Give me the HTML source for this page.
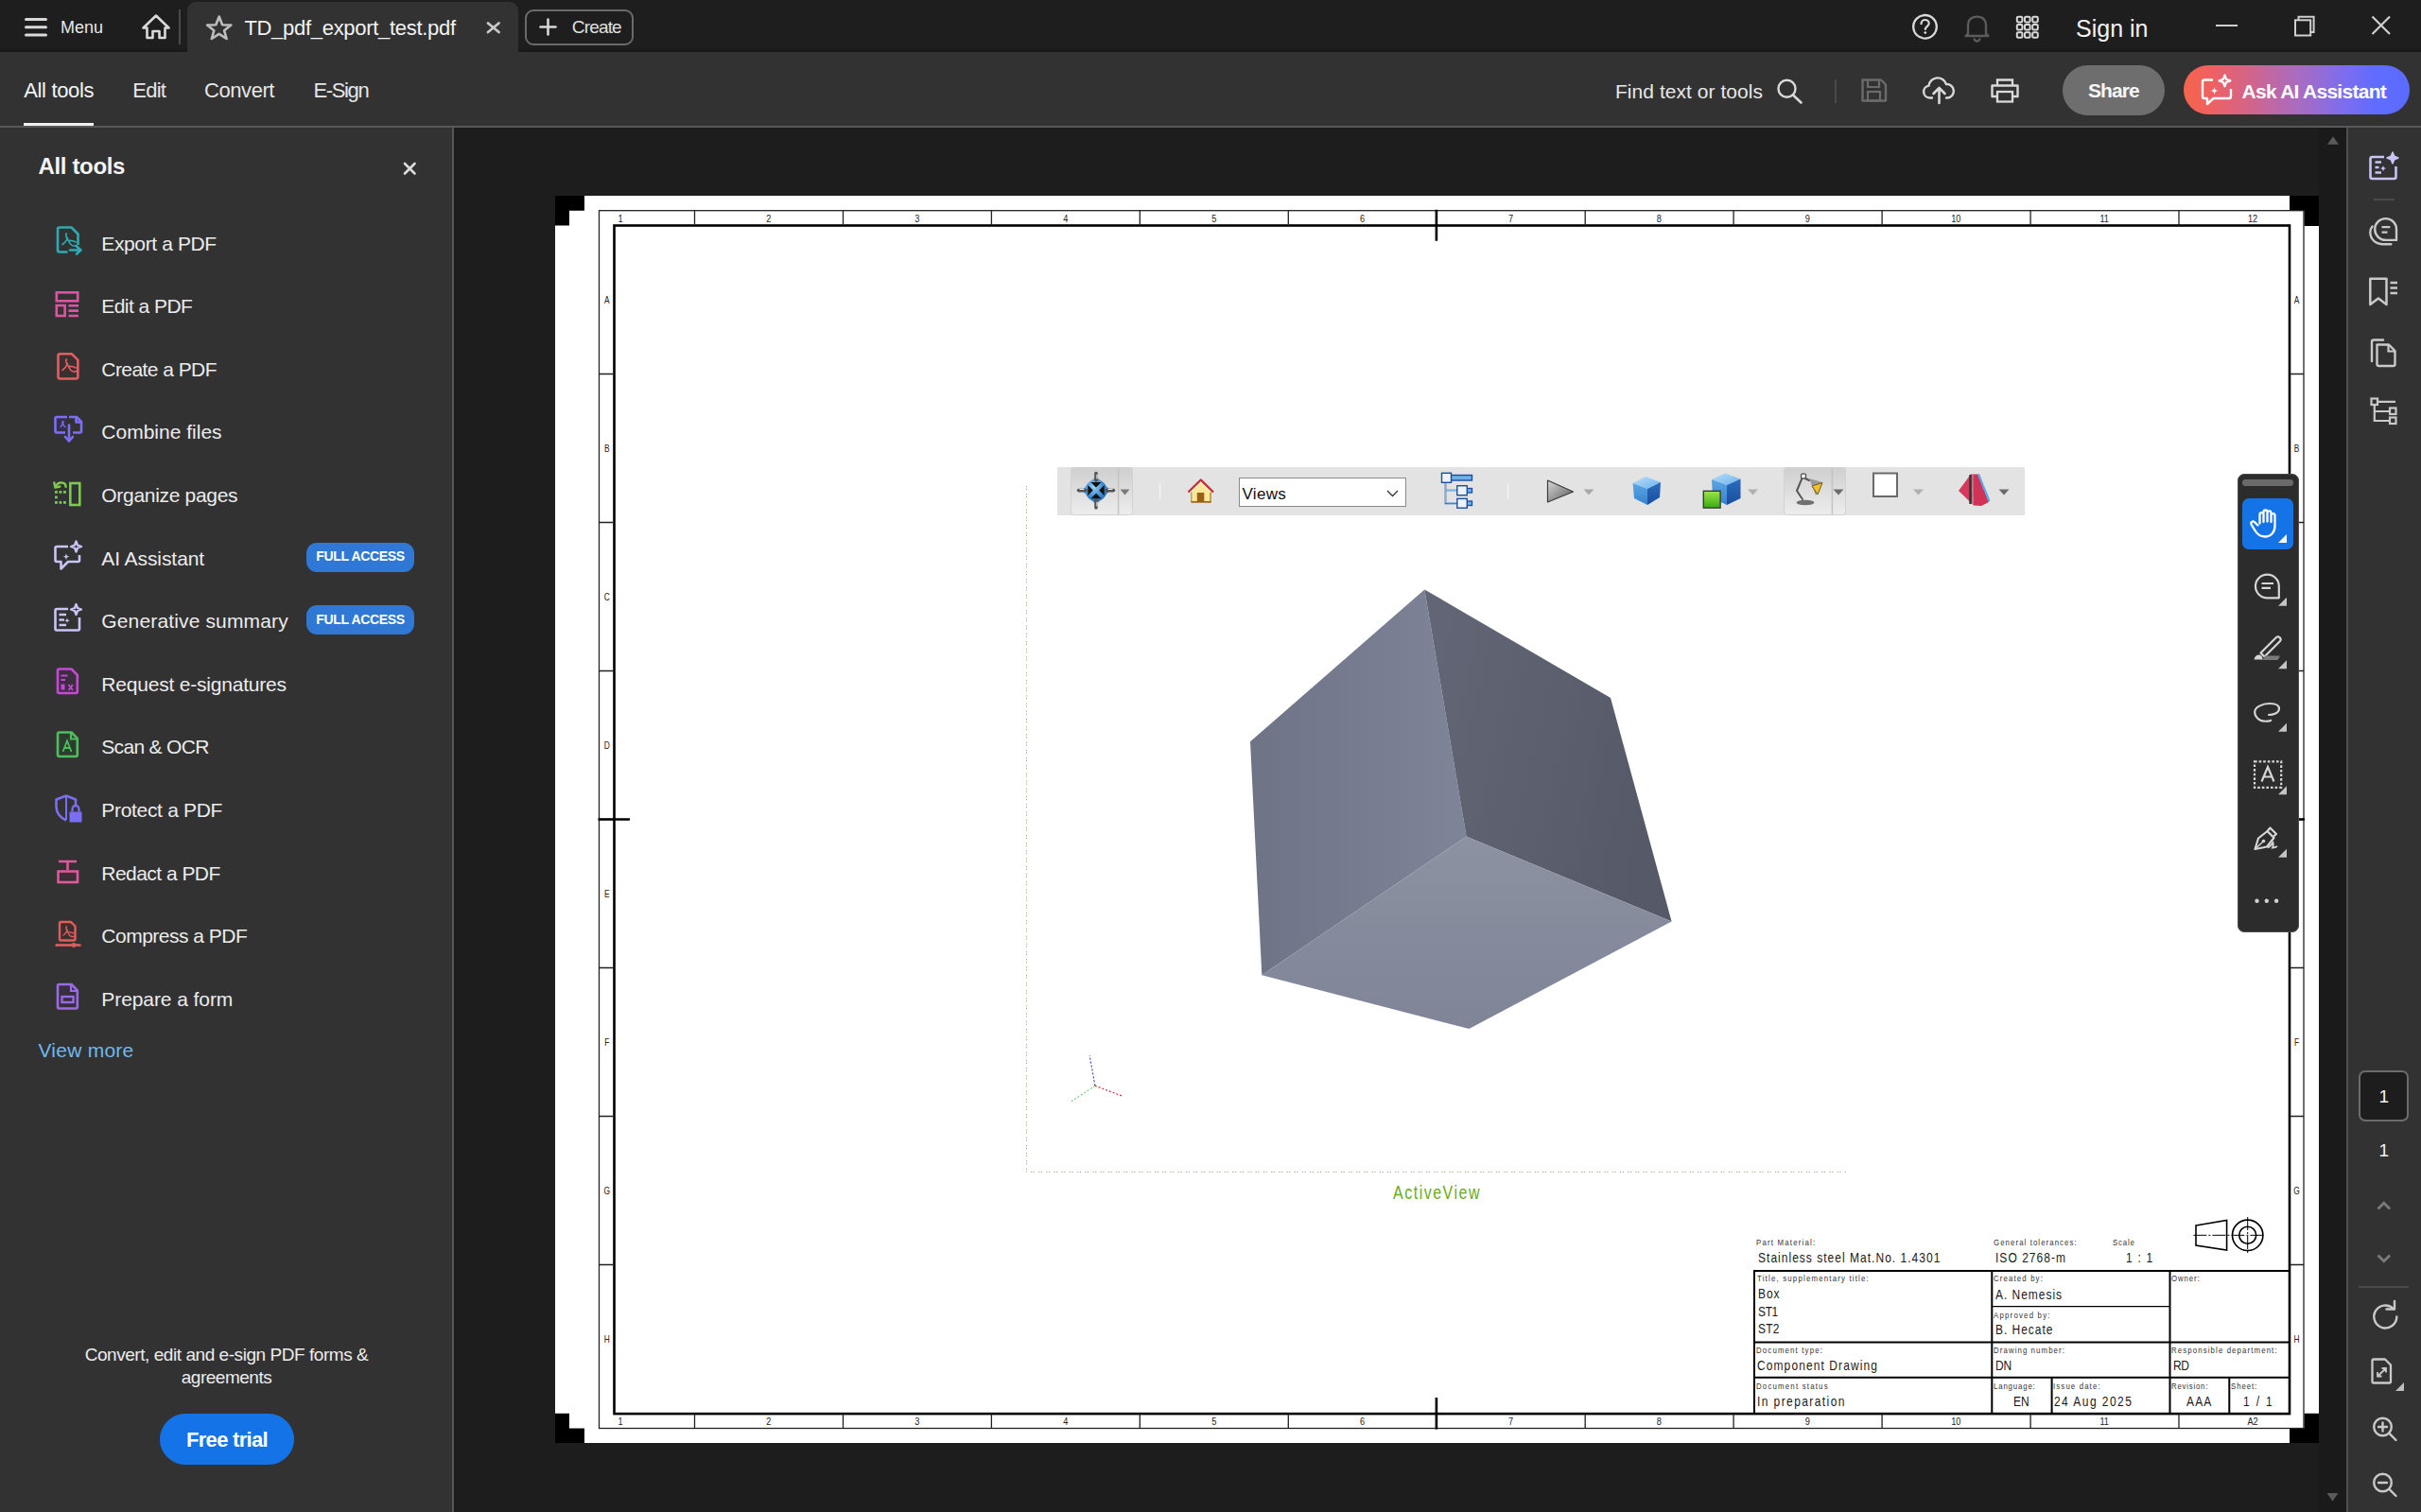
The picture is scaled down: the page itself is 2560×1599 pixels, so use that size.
<!DOCTYPE html><html><head><meta charset="utf-8"><style>
*{margin:0;padding:0;box-sizing:border-box}
html,body{width:2560px;height:1599px;overflow:hidden;background:#1e1e1e;font-family:"Liberation Sans",sans-serif;color:#fff;position:relative}
svg{position:absolute;overflow:visible}
</style></head><body>
<div style="position:absolute;left:0px;top:0px;width:2560px;height:55px;background:#1e1e1e"></div>
<div style="position:absolute;left:0px;top:52px;width:2560px;height:3px;background:#1a1a1a"></div>
<div style="position:absolute;left:0px;top:55px;width:2560px;height:78px;background:#323232"></div>
<div style="position:absolute;left:0px;top:133px;width:2560px;height:2px;background:#585858"></div>
<div style="position:absolute;left:0px;top:135px;width:478px;height:1464px;background:#323232"></div>
<div style="position:absolute;left:478px;top:135px;width:2px;height:1464px;background:#565656"></div>
<div style="position:absolute;left:480px;top:135px;width:1972px;height:1464px;background:#1d1d1d"></div>
<div style="position:absolute;left:2452px;top:135px;width:29px;height:1464px;background:#1a1a1a"></div>
<div style="position:absolute;left:2481px;top:135px;width:2px;height:1464px;background:#4f4f4f"></div>
<div style="position:absolute;left:2483px;top:135px;width:77px;height:1464px;background:#323232"></div>
<svg style="left:20px;top:10px;" width="40" height="40" viewBox="20 10 40 40"><g stroke="#d9d9d9" stroke-width="3" stroke-linecap="round"><path d="M27.5 20.5H48.5M27.5 28.7H48.5M27.5 37H48.5"/></g></svg>
<div style="position:absolute;left:64.00px;top:19.76px;font-size:18px;line-height:18px;font-weight:400;color:#e6e6e6;letter-spacing:-0.007px;white-space:nowrap;">Menu</div>
<svg style="left:145px;top:10px;" width="40" height="40" viewBox="145 10 40 40"><path d="M165 16.5 L151.5 29.5 H155.5 V40 H161.5 V33 H168.5 V40 H174.5 V29.5 H178.5 Z" fill="none" stroke="#d9d9d9" stroke-width="2.6" stroke-linejoin="round"/></svg>
<div style="position:absolute;left:189px;top:10px;width:2px;height:37px;background:#4a4a4a"></div>
<div style="position:absolute;left:198px;top:2px;width:350px;height:53px;background:#323232;border-radius:9px 9px 0 0"></div>
<svg style="left:215px;top:12px;" width="34" height="34" viewBox="215 12 34 34"><path d="M231.7 17.5 L235.1 26.3 L244.3 26.6 L237.1 32.3 L239.6 41 L231.7 35.9 L223.8 41 L226.3 32.3 L219.1 26.6 L228.3 26.3 Z" fill="none" stroke="#bdbdbd" stroke-width="2.6" stroke-linejoin="round"/></svg>
<div style="position:absolute;left:258.40px;top:18.98px;font-size:22px;line-height:22px;font-weight:400;color:#f2f2f2;letter-spacing:-0.296px;white-space:nowrap;">TD_pdf_export_test.pdf</div>
<svg style="left:510px;top:18px;" width="24" height="24" viewBox="510 18 24 24"><path d="M516 24.5L527.5 34M527.5 24.5L516 34" stroke="#c8c8c8" stroke-width="2.8" stroke-linecap="round"/></svg>
<div style="position:absolute;left:555px;top:10px;width:115px;height:38px;border:2px solid #6a6a6a;border-radius:9px"></div>
<svg style="left:565px;top:15px;" width="30" height="30" viewBox="565 15 30 30"><path d="M579.5 20.5V36.5M571.5 28.5H587.5" stroke="#d9d9d9" stroke-width="2.6" stroke-linecap="round"/></svg>
<div style="position:absolute;left:604.80px;top:19.12px;font-size:19px;line-height:19px;font-weight:400;color:#e0e0e0;letter-spacing:-0.838px;white-space:nowrap;">Create</div>
<svg style="left:2018px;top:10px;" width="36" height="36" viewBox="2018 10 36 36"><circle cx="2035.5" cy="28.3" r="12.3" fill="none" stroke="#d9d9d9" stroke-width="2.3"/><path d="M2031.5 25.2c0-2.4 1.8-4.2 4.1-4.2s4.1 1.7 4.1 3.9c0 2.7-3.9 3.2-3.9 6" fill="none" stroke="#d9d9d9" stroke-width="2.2" stroke-linecap="round"/><circle cx="2035.8" cy="34.6" r="1.4" fill="#d9d9d9"/></svg>
<svg style="left:2072px;top:10px;" width="36" height="36" viewBox="2072 10 36 36"><path d="M2081 35.5V26c0-4.6 3.3-8.4 9.5-8.4s9.5 3.8 9.5 8.4v9.5l2.5 2.5h-24z" fill="none" stroke="#5c5c5c" stroke-width="2.3" stroke-linejoin="round"/><path d="M2087.5 40.5a3 3 0 0 0 6 0" fill="none" stroke="#5c5c5c" stroke-width="2.3"/></svg>
<svg style="left:2128px;top:12px;" width="32" height="32" viewBox="2128 12 32 32"><rect x="2132.8" y="17.8" width="5.6" height="5.6" rx="1.3" fill="none" stroke="#d9d9d9" stroke-width="2"/><rect x="2132.8" y="26.0" width="5.6" height="5.6" rx="1.3" fill="none" stroke="#d9d9d9" stroke-width="2"/><rect x="2132.8" y="34.2" width="5.6" height="5.6" rx="1.3" fill="none" stroke="#d9d9d9" stroke-width="2"/><rect x="2141.0" y="17.8" width="5.6" height="5.6" rx="1.3" fill="none" stroke="#d9d9d9" stroke-width="2"/><rect x="2141.0" y="26.0" width="5.6" height="5.6" rx="1.3" fill="none" stroke="#d9d9d9" stroke-width="2"/><rect x="2141.0" y="34.2" width="5.6" height="5.6" rx="1.3" fill="none" stroke="#d9d9d9" stroke-width="2"/><rect x="2149.2" y="17.8" width="5.6" height="5.6" rx="1.3" fill="none" stroke="#d9d9d9" stroke-width="2"/><rect x="2149.2" y="26.0" width="5.6" height="5.6" rx="1.3" fill="none" stroke="#d9d9d9" stroke-width="2"/><rect x="2149.2" y="34.2" width="5.6" height="5.6" rx="1.3" fill="none" stroke="#d9d9d9" stroke-width="2"/></svg>
<div style="position:absolute;left:2195.00px;top:18.04px;font-size:25px;line-height:25px;font-weight:400;color:#f2f2f2;letter-spacing:0.008px;white-space:nowrap;">Sign in</div>
<div style="position:absolute;left:2343px;top:26px;width:23px;height:2px;background:#cfcfcf"></div>
<svg style="left:2420px;top:12px;" width="34" height="30" viewBox="2420 12 34 30"><path d="M2430.5 21.2V17.8H2446.6V33.9H2443.2" fill="none" stroke="#cfcfcf" stroke-width="2"/><rect x="2427" y="21.3" width="16.2" height="16.2" fill="none" stroke="#cfcfcf" stroke-width="2"/></svg>
<svg style="left:2502px;top:12px;" width="32" height="30" viewBox="2502 12 32 30"><path d="M2508.5 17.5L2527 36M2527 17.5L2508.5 36" stroke="#cfcfcf" stroke-width="2.2"/></svg>
<div style="position:absolute;left:25.20px;top:85.18px;font-size:22px;line-height:22px;font-weight:400;color:#f5f5f5;letter-spacing:-0.337px;white-space:nowrap;">All tools</div>
<div style="position:absolute;left:25px;top:130px;width:74px;height:3px;background:#f0f0f0"></div>
<div style="position:absolute;left:140.20px;top:85.18px;font-size:22px;line-height:22px;font-weight:400;color:#e6e6e6;letter-spacing:-0.728px;white-space:nowrap;">Edit</div>
<div style="position:absolute;left:216.00px;top:85.18px;font-size:22px;line-height:22px;font-weight:400;color:#e6e6e6;letter-spacing:-0.433px;white-space:nowrap;">Convert</div>
<div style="position:absolute;left:331.40px;top:85.18px;font-size:22px;line-height:22px;font-weight:400;color:#e6e6e6;letter-spacing:-1.339px;white-space:nowrap;">E-Sign</div>
<div style="position:absolute;left:1708.00px;top:86.22px;font-size:21px;line-height:21px;font-weight:400;color:#e8e8e8;letter-spacing:0.042px;white-space:nowrap;">Find text or tools</div>
<svg style="left:1875px;top:80px;" width="36" height="36" viewBox="1875 80 36 36"><circle cx="1889.5" cy="93.8" r="9" fill="none" stroke="#d9d9d9" stroke-width="2.4"/><path d="M1896 100.5L1904.5 108.5" stroke="#d9d9d9" stroke-width="2.6" stroke-linecap="round"/></svg>
<div style="position:absolute;left:1940px;top:84px;width:2px;height:25px;background:#4a4a4a"></div>
<svg style="left:1964px;top:78px;" width="36" height="36" viewBox="1964 78 36 36"><path d="M1969.5 84.5H1989L1994 89.5V106.5H1969.5Z" fill="none" stroke="#6b6b6b" stroke-width="2.4" stroke-linejoin="round"/><path d="M1975 84.5V92H1987V84.5" fill="none" stroke="#6b6b6b" stroke-width="2.2"/><rect x="1975" y="97" width="13" height="9.5" fill="none" stroke="#6b6b6b" stroke-width="2.2"/></svg>
<svg style="left:2030px;top:76px;" width="40" height="40" viewBox="2030 76 40 40"><path d="M2043 103.5H2040.5a6.5 6.5 0 0 1-1-12.9 9.5 9.5 0 0 1 18.5-1.5 7 7 0 0 1 1.3 14.4H2058" fill="none" stroke="#d9d9d9" stroke-width="2.4" stroke-linecap="round" stroke-linejoin="round"/><path d="M2050.5 109V93.5M2044.5 99L2050.5 93L2056.5 99" fill="none" stroke="#d9d9d9" stroke-width="2.6" stroke-linecap="round" stroke-linejoin="round"/></svg>
<svg style="left:2100px;top:78px;" width="40" height="36" viewBox="2100 78 40 36"><path d="M2112 90.5V84.5H2128V90.5" fill="none" stroke="#d9d9d9" stroke-width="2.3"/><path d="M2111.5 102H2106.5V90.5H2133.5V102H2128.5" fill="none" stroke="#d9d9d9" stroke-width="2.4" stroke-linejoin="round"/><rect x="2112" y="97" width="16" height="10.5" fill="none" stroke="#d9d9d9" stroke-width="2.3"/></svg>
<div style="position:absolute;left:2181px;top:69px;width:108px;height:53px;background:#6e6e6e;border-radius:27px"></div>
<div style="position:absolute;left:2207.90px;top:85.42px;font-size:21px;line-height:21px;font-weight:700;color:#f7f7f7;letter-spacing:-0.873px;white-space:nowrap;">Share</div>
<div style="position:absolute;left:2309px;top:69px;width:239px;height:52px;background:linear-gradient(90deg,#f6644a 0%,#ef6162 12%,#d0658c 30%,#a66cc4 52%,#7b6df0 72%,#5f6cff 85%,#5b6bff 100%);border-radius:26px"></div>
<svg style="left:2324px;top:74px;" width="44" height="44" viewBox="2324 74 44 44"><path d="M2340 84.5H2331a2 2 0 0 0-2 2V102a2 2 0 0 0 2 2h3v6l6.5-6H2357a2 2 0 0 0 2-2V94" fill="none" stroke="#fff" stroke-width="2.4" stroke-linejoin="round"/><path d="M2352.5 79.5l1.6 4.3 4.3 1.6-4.3 1.6-1.6 4.3-1.6-4.3-4.3-1.6 4.3-1.6z" fill="none" stroke="#fff" stroke-width="2.2" stroke-linejoin="round"/><path d="M2341.5 92.5l1 2.6 2.6 1-2.6 1-1 2.6-1-2.6-2.6-1 2.6-1z" fill="#fff"/></svg>
<div style="position:absolute;left:2370.50px;top:85.72px;font-size:21px;line-height:21px;font-weight:700;color:#fff;letter-spacing:-0.729px;white-space:nowrap;">Ask AI Assistant</div>
<div style="position:absolute;left:40.50px;top:164.08px;font-size:24px;line-height:24px;font-weight:700;color:#f5f5f5;letter-spacing:-0.352px;white-space:nowrap;">All tools</div>
<svg style="left:420px;top:165px;" width="26" height="26" viewBox="420 165 26 26"><path d="M428 173L438.5 183.5M438.5 173L428 183.5" stroke="#dcdcdc" stroke-width="2.6" stroke-linecap="round"/></svg>
<div style="position:absolute;left:107.30px;top:246.52px;font-size:21px;line-height:21px;font-weight:400;color:#ececec;letter-spacing:-0.379px;white-space:nowrap;">Export a PDF</div>
<div style="position:absolute;left:107.30px;top:313.14px;font-size:21px;line-height:21px;font-weight:400;color:#ececec;letter-spacing:-0.554px;white-space:nowrap;">Edit a PDF</div>
<div style="position:absolute;left:107.30px;top:379.76px;font-size:21px;line-height:21px;font-weight:400;color:#ececec;letter-spacing:-0.557px;white-space:nowrap;">Create a PDF</div>
<div style="position:absolute;left:107.30px;top:446.38px;font-size:21px;line-height:21px;font-weight:400;color:#ececec;letter-spacing:0.006px;white-space:nowrap;">Combine files</div>
<div style="position:absolute;left:107.30px;top:513.00px;font-size:21px;line-height:21px;font-weight:400;color:#ececec;letter-spacing:-0.305px;white-space:nowrap;">Organize pages</div>
<div style="position:absolute;left:107.30px;top:579.62px;font-size:21px;line-height:21px;font-weight:400;color:#ececec;letter-spacing:-0.077px;white-space:nowrap;">AI Assistant</div>
<div style="position:absolute;left:107.30px;top:646.24px;font-size:21px;line-height:21px;font-weight:400;color:#ececec;letter-spacing:0.144px;white-space:nowrap;">Generative summary</div>
<div style="position:absolute;left:107.30px;top:712.86px;font-size:21px;line-height:21px;font-weight:400;color:#ececec;letter-spacing:-0.201px;white-space:nowrap;">Request e-signatures</div>
<div style="position:absolute;left:107.30px;top:779.48px;font-size:21px;line-height:21px;font-weight:400;color:#ececec;letter-spacing:-0.681px;white-space:nowrap;">Scan &amp; OCR</div>
<div style="position:absolute;left:107.30px;top:846.10px;font-size:21px;line-height:21px;font-weight:400;color:#ececec;letter-spacing:-0.314px;white-space:nowrap;">Protect a PDF</div>
<div style="position:absolute;left:107.30px;top:912.72px;font-size:21px;line-height:21px;font-weight:400;color:#ececec;letter-spacing:-0.532px;white-space:nowrap;">Redact a PDF</div>
<div style="position:absolute;left:107.30px;top:979.34px;font-size:21px;line-height:21px;font-weight:400;color:#ececec;letter-spacing:-0.503px;white-space:nowrap;">Compress a PDF</div>
<div style="position:absolute;left:107.30px;top:1045.96px;font-size:21px;line-height:21px;font-weight:400;color:#ececec;letter-spacing:-0.076px;white-space:nowrap;">Prepare a form</div>
<div style="position:absolute;left:324px;top:573.6000000000001px;width:114px;height:31px;background:#2f78d6;border-radius:11px"></div>
<div style="position:absolute;left:334.35px;top:581.25px;font-size:14px;line-height:14px;font-weight:700;color:#fff;letter-spacing:-0.357px;white-space:nowrap;">FULL ACCESS</div>
<div style="position:absolute;left:324px;top:640.22px;width:114px;height:31px;background:#2f78d6;border-radius:11px"></div>
<div style="position:absolute;left:334.35px;top:647.87px;font-size:14px;line-height:14px;font-weight:700;color:#fff;letter-spacing:-0.357px;white-space:nowrap;">FULL ACCESS</div>
<svg style="left:56px;top:236px;" width="34" height="36" viewBox="56 236 34 36"><path d="M71.5 266.5H63a2 2 0 0 1-2-2V242.5a2 2 0 0 1 2-2H75.5L82.5 247.5V259" fill="none" stroke="#2eaab3" stroke-width="2.6" stroke-linejoin="round"/><path d="M74 264.5H85M81 260.5L85.5 264.5L81 268.5" fill="none" stroke="#2eaab3" stroke-width="2.6" stroke-linecap="round" stroke-linejoin="round"/><path d="M70.5 247c-1.2 0 -1 2.2 .2 4.6l3.6 6.3c1.5 2.4 5 2.5 6.3 1.6M66 258.5c1.5 -.9 4.5 -4.5 5.5 -7M72.5 254.5c2 -.2 6 .5 7.5 1.5" fill="none" stroke="#2eaab3" stroke-width="1.6" stroke-linecap="round"/></svg>
<svg style="left:56px;top:304px;" width="32" height="34" viewBox="56 304 32 34"><rect x="59.8" y="309.3" width="22.4" height="9" fill="none" stroke="#db55a2" stroke-width="2.6"/><rect x="59.8" y="323" width="8.8" height="11" fill="none" stroke="#db55a2" stroke-width="2.6"/><path d="M72.5 323.3H83M72.5 328.6H83M72.5 334H83" stroke="#db55a2" stroke-width="2.6"/></svg>
<svg style="left:56px;top:370px;" width="34" height="36" viewBox="56 370 34 36"><path d="M63.5 374.3H76L82.3 380.6V398.5a2 2 0 0 1-2 2H63.5a2 2 0 0 1-2-2V376.3a2 2 0 0 1 2-2Z" fill="#3a3031" stroke="#e35d62" stroke-width="2.6" stroke-linejoin="round"/><path d="M70.5 380c-1.2 0 -1 2.2 .2 4.6l3.6 6.3c1.5 2.4 5 2.5 6.3 1.6M66 391.5c1.5 -.9 4.5 -4.5 5.5 -7M72.5 387.5c2 -.2 6 .5 7.5 1.5" fill="none" stroke="#e35d62" stroke-width="1.6" stroke-linecap="round"/></svg>
<svg style="left:54px;top:436px;" width="36" height="36" viewBox="54 436 36 36"><path d="M71 441H60a1.5 1.5 0 0 0-1.5 1.5V456a1.5 1.5 0 0 0 1.5 1.5H69" fill="#34304a" stroke="#7d6ff5" stroke-width="2.6" stroke-linejoin="round"/><path d="M73 441H81L86 446V456a1.5 1.5 0 0 1-1.5 1.5H77M80.5 441V446.5H86" fill="none" stroke="#7d6ff5" stroke-width="2.6" stroke-linejoin="round"/><path d="M73 449.5V466M69 462L73 466.5L77 462" fill="none" stroke="#7d6ff5" stroke-width="2.6" stroke-linecap="round" stroke-linejoin="round"/><path d="M64 452c.5-1.5 2.5-4 3-5.5c.2-.8-.8-1.3-1-.3c-.3 1.5 1.3 4.5 3.5 5.5" fill="none" stroke="#7d6ff5" stroke-width="1.4"/></svg>
<svg style="left:54px;top:505px;" width="36" height="34" viewBox="54 505 36 34"><rect x="74.3" y="511" width="10" height="23" fill="none" stroke="#7cca4c" stroke-width="2.6"/><rect x="58" y="519" width="2.8" height="2.8" fill="#7cca4c"/><rect x="62.5" y="519" width="2.8" height="2.8" fill="#7cca4c"/><rect x="67" y="519" width="2.8" height="2.8" fill="#7cca4c"/><rect x="58" y="524.5" width="2.8" height="2.8" fill="#7cca4c"/><rect x="58" y="530" width="2.8" height="2.8" fill="#7cca4c"/><rect x="62.5" y="530" width="2.8" height="2.8" fill="#7cca4c"/><rect x="67" y="530" width="2.8" height="2.8" fill="#7cca4c"/><path d="M58.8 514.5c1.5-3.5 4.5-4.5 7.8-3.8c2 .5 3 2 3 4" fill="none" stroke="#7cca4c" stroke-width="2.4" stroke-linecap="round"/><path d="M57.3 510.5L58.3 515.5L63.3 514.5" fill="none" stroke="#7cca4c" stroke-width="2.4" stroke-linecap="round" stroke-linejoin="round"/></svg>
<svg style="left:54px;top:568px;" width="36" height="38" viewBox="54 568 36 38"><path d="M72 578H60a1.5 1.5 0 0 0-1.5 1.5V592.5a1.5 1.5 0 0 0 1.5 1.5H64.5V601.5L72 594H82.5a1.5 1.5 0 0 0 1.5-1.5V587" fill="none" stroke="#c8c4f6" stroke-width="2.6" stroke-linejoin="round"/><path d="M80.5 572.5l1.5 4 4 1.5-4 1.5-1.5 4-1.5-4-4-1.5 4-1.5z" fill="none" stroke="#c8c4f6" stroke-width="2.3" stroke-linejoin="round"/><path d="M70 585.5l.9 2.3 2.3.9-2.3.9-.9 2.3-.9-2.3-2.3-.9 2.3-.9z" fill="#c8c4f6"/></svg>
<svg style="left:54px;top:634px;" width="36" height="38" viewBox="54 634 36 38"><path d="M72 644H60a1.5 1.5 0 0 0-1.5 1.5V665a1.5 1.5 0 0 0 1.5 1.5H82.5a1.5 1.5 0 0 0 1.5-1.5V653" fill="none" stroke="#c8c4f6" stroke-width="2.6" stroke-linejoin="round"/><path d="M80.5 639l1.5 4 4 1.5-4 1.5-1.5 4-1.5-4-4-1.5 4-1.5z" fill="none" stroke="#c8c4f6" stroke-width="2.3" stroke-linejoin="round"/><path d="M62.5 650H70M62.5 655.5H68M62.5 661H70" stroke="#c8c4f6" stroke-width="2.3"/><path d="M71 653.5l.8 2 2 .8-2 .8-.8 2-.8-2-2-.8 2-.8z" fill="#c8c4f6"/></svg>
<svg style="left:56px;top:702px;" width="32" height="38" viewBox="56 702 32 38"><path d="M62.5 707.5H75.5L81.8 713.8V731.5a1.5 1.5 0 0 1-1.5 1.5H62.5a1.5 1.5 0 0 1-1.5-1.5V709a1.5 1.5 0 0 1 1.5-1.5Z" fill="#3b2e3f" stroke="#c747d6" stroke-width="2.6" stroke-linejoin="round"/><path d="M64.5 714.5H71.5M64.5 719H69" stroke="#c747d6" stroke-width="2.2"/><path d="M64.5 723.5H68.5V729.5H64.5Z" fill="#c747d6"/><path d="M72.5 724L77 730M77 724L72.5 730" stroke="#c747d6" stroke-width="1.8"/></svg>
<svg style="left:56px;top:769px;" width="32" height="36" viewBox="56 769 32 36"><path d="M62.5 774.5H75.5L81.8 780.8V798.5a1.5 1.5 0 0 1-1.5 1.5H62.5a1.5 1.5 0 0 1-1.5-1.5V776a1.5 1.5 0 0 1 1.5-1.5Z" fill="#2e3b30" stroke="#4dbe5e" stroke-width="2.6" stroke-linejoin="round"/><path d="M75 774.5V781.5H81.8" fill="none" stroke="#4dbe5e" stroke-width="2.2"/><path d="M66.5 795L71 783.5L75.5 795M68 791H74" fill="none" stroke="#4dbe5e" stroke-width="1.8"/></svg>
<svg style="left:54px;top:836px;" width="36" height="38" viewBox="54 836 36 38"><path d="M70 841.5L59.5 845.5V853c0 6.5 4 11.5 10.5 14.5M70 841.5L80 845.5V852" fill="none" stroke="#7a6ff2" stroke-width="2.6" stroke-linejoin="round"/><path d="M70 842V867" stroke="#7a6ff2" stroke-width="2"/><path d="M73.5 858.5H86.5V869.5H73.5Z" fill="#7a6ff2"/><path d="M76.5 858.5V855.5a3.5 3.5 0 0 1 7 0V858.5" fill="none" stroke="#7a6ff2" stroke-width="2.3"/></svg>
<svg style="left:56px;top:905px;" width="32" height="34" viewBox="56 905 32 34"><path d="M62 911H81M71.5 911V920" stroke="#e0579b" stroke-width="2.6"/><rect x="61.5" y="921.5" width="20.5" height="11.5" fill="#3b2f36" stroke="#e0579b" stroke-width="2.6"/></svg>
<svg style="left:54px;top:970px;" width="36" height="36" viewBox="54 970 36 36"><path d="M64.5 975H75L79.5 979.5V993a1.5 1.5 0 0 1-1.5 1.5H64.5A1.5 1.5 0 0 1 63 993V976.5A1.5 1.5 0 0 1 64.5 975Z" fill="#3b2f30" stroke="#e35d5d" stroke-width="2.4" stroke-linejoin="round"/><path d="M58.5 999.5H85.5" stroke="#e35d5d" stroke-width="2.6"/><circle cx="78" cy="999.5" r="2.4" fill="#e35d5d"/><path d="M70.5 980c-1 0-.8 1.8.2 3.8l2.8 5c1.2 2 4 2 5 1.3M67 989c1.2-.7 3.5-3.5 4.3-5.5M72 986c1.6-.2 4.7.4 5.9 1.2" fill="none" stroke="#e35d5d" stroke-width="1.4" stroke-linecap="round"/></svg>
<svg style="left:56px;top:1035px;" width="32" height="36" viewBox="56 1035 32 36"><path d="M62.5 1041H75.5L81.8 1047.3V1065a1.5 1.5 0 0 1-1.5 1.5H62.5a1.5 1.5 0 0 1-1.5-1.5V1042.5a1.5 1.5 0 0 1 1.5-1.5Z" fill="#372f40" stroke="#9a6be2" stroke-width="2.6" stroke-linejoin="round"/><path d="M75 1041V1048H81.8" fill="none" stroke="#9a6be2" stroke-width="2.2"/><rect x="65.5" y="1054" width="12" height="6" fill="none" stroke="#9a6be2" stroke-width="2.4"/></svg>
<div style="position:absolute;left:40.50px;top:1099.92px;font-size:21px;line-height:21px;font-weight:400;color:#6fb8ec;letter-spacing:0.242px;white-space:nowrap;">View more</div>
<div style="position:absolute;left:89.70px;top:1423.42px;font-size:19px;line-height:19px;font-weight:400;color:#ececec;letter-spacing:-0.448px;white-space:nowrap;">Convert, edit and e-sign PDF forms &amp;</div>
<div style="position:absolute;left:191.75px;top:1447.42px;font-size:19px;line-height:19px;font-weight:400;color:#ececec;letter-spacing:-0.484px;white-space:nowrap;">agreements</div>
<div style="position:absolute;left:168.5px;top:1494.6px;width:142px;height:54px;background:#1473e6;border-radius:27px"></div>
<div style="position:absolute;left:197.00px;top:1511.68px;font-size:22px;line-height:22px;font-weight:700;color:#fff;letter-spacing:-0.693px;white-space:nowrap;">Free trial</div>
<div style="position:absolute;left:587px;top:207px;width:1865px;height:1319px;background:#fff"></div>
<svg style="left:0;top:0" width="2560" height="1599" viewBox="0 0 2560 1599" font-family="Liberation Sans" fill="#000"><path d="M587 207H618V222.7H602V238.6H587Z" fill="#000"/><path d="M2452 207H2421V222.7H2436.5V239H2452Z" fill="#000"/><path d="M587 1526H618V1510.5H602V1494.7H587Z" fill="#000"/><path d="M2452 1526H2421V1510.5H2436.5V1494.7H2452Z" fill="#000"/><rect x="633.5" y="222.7" width="1802.5" height="1287.8" fill="none" stroke="#222" stroke-width="1.3"/><rect x="649.5" y="238.5" width="1771.5" height="1256.6" fill="none" stroke="#000" stroke-width="2.6"/><path d="M734.5 222.7V238.5M734.5 1494.5V1510.5" stroke="#222" stroke-width="1.3"/><path d="M891.5 222.7V238.5M891.5 1494.5V1510.5" stroke="#222" stroke-width="1.3"/><path d="M1048.4 222.7V238.5M1048.4 1494.5V1510.5" stroke="#222" stroke-width="1.3"/><path d="M1205.3 222.7V238.5M1205.3 1494.5V1510.5" stroke="#222" stroke-width="1.3"/><path d="M1362.3 222.7V238.5M1362.3 1494.5V1510.5" stroke="#222" stroke-width="1.3"/><path d="M1519.2 222.7V238.5M1519.2 1494.5V1510.5" stroke="#222" stroke-width="1.3"/><path d="M1676.2 222.7V238.5M1676.2 1494.5V1510.5" stroke="#222" stroke-width="1.3"/><path d="M1833.1 222.7V238.5M1833.1 1494.5V1510.5" stroke="#222" stroke-width="1.3"/><path d="M1990.1 222.7V238.5M1990.1 1494.5V1510.5" stroke="#222" stroke-width="1.3"/><path d="M2147.1 222.7V238.5M2147.1 1494.5V1510.5" stroke="#222" stroke-width="1.3"/><path d="M2304.0 222.7V238.5M2304.0 1494.5V1510.5" stroke="#222" stroke-width="1.3"/><path d="M633.5 395.5H649.5M2421 395.5H2436" stroke="#222" stroke-width="1.3"/><path d="M633.5 552.5H649.5M2421 552.5H2436" stroke="#222" stroke-width="1.3"/><path d="M633.5 709.5H649.5M2421 709.5H2436" stroke="#222" stroke-width="1.3"/><path d="M633.5 866.5H649.5M2421 866.5H2436" stroke="#222" stroke-width="1.3"/><path d="M633.5 1023.5H649.5M2421 1023.5H2436" stroke="#222" stroke-width="1.3"/><path d="M633.5 1180.5H649.5M2421 1180.5H2436" stroke="#222" stroke-width="1.3"/><path d="M633.5 1337.5H649.5M2421 1337.5H2436" stroke="#222" stroke-width="1.3"/><path d="M1518.9 221.7V254.7M1518.9 1478V1511.5M632.5 866.5H666M2404 866.5H2437" stroke="#000" stroke-width="2.6"/><text transform="translate(656.0 231.0) scale(0.8 1)" font-size="11.5" text-anchor="middle" dominant-baseline="central" fill="#222">1</text><text transform="translate(656.0 1502.8) scale(0.8 1)" font-size="11.5" text-anchor="middle" dominant-baseline="central" fill="#222">1</text><text transform="translate(812.9 231.0) scale(0.8 1)" font-size="11.5" text-anchor="middle" dominant-baseline="central" fill="#222">2</text><text transform="translate(812.9 1502.8) scale(0.8 1)" font-size="11.5" text-anchor="middle" dominant-baseline="central" fill="#222">2</text><text transform="translate(969.8 231.0) scale(0.8 1)" font-size="11.5" text-anchor="middle" dominant-baseline="central" fill="#222">3</text><text transform="translate(969.8 1502.8) scale(0.8 1)" font-size="11.5" text-anchor="middle" dominant-baseline="central" fill="#222">3</text><text transform="translate(1126.8 231.0) scale(0.8 1)" font-size="11.5" text-anchor="middle" dominant-baseline="central" fill="#222">4</text><text transform="translate(1126.8 1502.8) scale(0.8 1)" font-size="11.5" text-anchor="middle" dominant-baseline="central" fill="#222">4</text><text transform="translate(1283.7 231.0) scale(0.8 1)" font-size="11.5" text-anchor="middle" dominant-baseline="central" fill="#222">5</text><text transform="translate(1283.7 1502.8) scale(0.8 1)" font-size="11.5" text-anchor="middle" dominant-baseline="central" fill="#222">5</text><text transform="translate(1440.6 231.0) scale(0.8 1)" font-size="11.5" text-anchor="middle" dominant-baseline="central" fill="#222">6</text><text transform="translate(1440.6 1502.8) scale(0.8 1)" font-size="11.5" text-anchor="middle" dominant-baseline="central" fill="#222">6</text><text transform="translate(1597.5 231.0) scale(0.8 1)" font-size="11.5" text-anchor="middle" dominant-baseline="central" fill="#222">7</text><text transform="translate(1597.5 1502.8) scale(0.8 1)" font-size="11.5" text-anchor="middle" dominant-baseline="central" fill="#222">7</text><text transform="translate(1754.4 231.0) scale(0.8 1)" font-size="11.5" text-anchor="middle" dominant-baseline="central" fill="#222">8</text><text transform="translate(1754.4 1502.8) scale(0.8 1)" font-size="11.5" text-anchor="middle" dominant-baseline="central" fill="#222">8</text><text transform="translate(1911.4 231.0) scale(0.8 1)" font-size="11.5" text-anchor="middle" dominant-baseline="central" fill="#222">9</text><text transform="translate(1911.4 1502.8) scale(0.8 1)" font-size="11.5" text-anchor="middle" dominant-baseline="central" fill="#222">9</text><text transform="translate(2068.3 231.0) scale(0.8 1)" font-size="11.5" text-anchor="middle" dominant-baseline="central" fill="#222">10</text><text transform="translate(2068.3 1502.8) scale(0.8 1)" font-size="11.5" text-anchor="middle" dominant-baseline="central" fill="#222">10</text><text transform="translate(2225.2 231.0) scale(0.8 1)" font-size="11.5" text-anchor="middle" dominant-baseline="central" fill="#222">11</text><text transform="translate(2225.2 1502.8) scale(0.8 1)" font-size="11.5" text-anchor="middle" dominant-baseline="central" fill="#222">11</text><text transform="translate(2382.1 231.0) scale(0.8 1)" font-size="11.5" text-anchor="middle" dominant-baseline="central" fill="#222">12</text><text transform="translate(2382.1 1502.8) scale(0.8 1)" font-size="11.5" text-anchor="middle" dominant-baseline="central" fill="#222">A2</text><text transform="translate(641.8 317.0) scale(0.8 1)" font-size="10.5" text-anchor="middle" dominant-baseline="central" fill="#222">A</text><text transform="translate(2428.5 317.0) scale(0.8 1)" font-size="10.5" text-anchor="middle" dominant-baseline="central" fill="#222">A</text><text transform="translate(641.8 474.0) scale(0.8 1)" font-size="10.5" text-anchor="middle" dominant-baseline="central" fill="#222">B</text><text transform="translate(2428.5 474.0) scale(0.8 1)" font-size="10.5" text-anchor="middle" dominant-baseline="central" fill="#222">B</text><text transform="translate(641.8 631.0) scale(0.8 1)" font-size="10.5" text-anchor="middle" dominant-baseline="central" fill="#222">C</text><text transform="translate(641.8 788.0) scale(0.8 1)" font-size="10.5" text-anchor="middle" dominant-baseline="central" fill="#222">D</text><text transform="translate(641.8 945.0) scale(0.8 1)" font-size="10.5" text-anchor="middle" dominant-baseline="central" fill="#222">E</text><text transform="translate(641.8 1102.0) scale(0.8 1)" font-size="10.5" text-anchor="middle" dominant-baseline="central" fill="#222">F</text><text transform="translate(2428.5 1102.0) scale(0.8 1)" font-size="10.5" text-anchor="middle" dominant-baseline="central" fill="#222">F</text><text transform="translate(641.8 1259.0) scale(0.8 1)" font-size="10.5" text-anchor="middle" dominant-baseline="central" fill="#222">G</text><text transform="translate(2428.5 1259.0) scale(0.8 1)" font-size="10.5" text-anchor="middle" dominant-baseline="central" fill="#222">G</text><text transform="translate(641.8 1416.0) scale(0.8 1)" font-size="10.5" text-anchor="middle" dominant-baseline="central" fill="#222">H</text><text transform="translate(2428.5 1416.0) scale(0.8 1)" font-size="10.5" text-anchor="middle" dominant-baseline="central" fill="#222">H</text><path d="M1855 1344H2421M1855 1419.6H2421M1855 1456.7H2421M1855 1343V1495M2106.3 1344V1494.5M2294.5 1344V1494.5M2169.6 1456.7V1494.5M2357.3 1456.7V1494.5" stroke="#000" stroke-width="2"/><path d="M2106.3 1381.7H2294.5" stroke="#000" stroke-width="1.2"/><path d="M2322 1296L2354.6 1290.5V1322L2322 1317Z" fill="none" stroke="#000" stroke-width="1.6"/><circle cx="2376.7" cy="1306.3" r="16.2" fill="none" stroke="#000" stroke-width="1.6"/><circle cx="2376.7" cy="1306.3" r="9" fill="none" stroke="#000" stroke-width="1.6"/><path d="M2319.4 1306.3H2394.4M2376.7 1287V1325.6" stroke="#000" stroke-width="1" stroke-dasharray="14 2 2 2"/></svg>
<div style="position:absolute;left:1857.00px;top:1309.40px;font-size:9.8px;line-height:9.8px;font-weight:400;color:#333;letter-spacing:1.498px;white-space:nowrap;transform:scaleX(0.8);transform-origin:0 0;">Part Material:</div>
<div style="position:absolute;left:2108.40px;top:1309.40px;font-size:9.8px;line-height:9.8px;font-weight:400;color:#333;letter-spacing:1.341px;white-space:nowrap;transform:scaleX(0.8);transform-origin:0 0;">General tolerances:</div>
<div style="position:absolute;left:2233.80px;top:1309.40px;font-size:9.8px;line-height:9.8px;font-weight:400;color:#333;letter-spacing:0.997px;white-space:nowrap;transform:scaleX(0.8);transform-origin:0 0;">Scale</div>
<div style="position:absolute;left:1857.70px;top:1347.00px;font-size:9.8px;line-height:9.8px;font-weight:400;color:#333;letter-spacing:1.488px;white-space:nowrap;transform:scaleX(0.8);transform-origin:0 0;">Title, supplementary title:</div>
<div style="position:absolute;left:2108.40px;top:1347.00px;font-size:9.8px;line-height:9.8px;font-weight:400;color:#333;letter-spacing:1.417px;white-space:nowrap;transform:scaleX(0.8);transform-origin:0 0;">Created by:</div>
<div style="position:absolute;left:2296.30px;top:1347.00px;font-size:9.8px;line-height:9.8px;font-weight:400;color:#333;letter-spacing:1.131px;white-space:nowrap;transform:scaleX(0.8);transform-origin:0 0;">Owner:</div>
<div style="position:absolute;left:2108.40px;top:1385.70px;font-size:9.8px;line-height:9.8px;font-weight:400;color:#333;letter-spacing:1.511px;white-space:nowrap;transform:scaleX(0.8);transform-origin:0 0;">Approved by:</div>
<div style="position:absolute;left:1856.60px;top:1422.80px;font-size:9.8px;line-height:9.8px;font-weight:400;color:#333;letter-spacing:1.437px;white-space:nowrap;transform:scaleX(0.8);transform-origin:0 0;">Document type:</div>
<div style="position:absolute;left:2108.40px;top:1422.80px;font-size:9.8px;line-height:9.8px;font-weight:400;color:#333;letter-spacing:1.359px;white-space:nowrap;transform:scaleX(0.8);transform-origin:0 0;">Drawing number:</div>
<div style="position:absolute;left:2296.30px;top:1422.80px;font-size:9.8px;line-height:9.8px;font-weight:400;color:#333;letter-spacing:1.388px;white-space:nowrap;transform:scaleX(0.8);transform-origin:0 0;">Responsible department:</div>
<div style="position:absolute;left:1856.60px;top:1460.70px;font-size:9.8px;line-height:9.8px;font-weight:400;color:#333;letter-spacing:1.498px;white-space:nowrap;transform:scaleX(0.8);transform-origin:0 0;">Document status</div>
<div style="position:absolute;left:2108.40px;top:1460.70px;font-size:9.8px;line-height:9.8px;font-weight:400;color:#333;letter-spacing:1.047px;white-space:nowrap;transform:scaleX(0.8);transform-origin:0 0;">Language:</div>
<div style="position:absolute;left:2170.90px;top:1460.70px;font-size:9.8px;line-height:9.8px;font-weight:400;color:#333;letter-spacing:1.403px;white-space:nowrap;transform:scaleX(0.8);transform-origin:0 0;">Issue date:</div>
<div style="position:absolute;left:2296.30px;top:1460.70px;font-size:9.8px;line-height:9.8px;font-weight:400;color:#333;letter-spacing:0.966px;white-space:nowrap;transform:scaleX(0.8);transform-origin:0 0;">Revision:</div>
<div style="position:absolute;left:2359.30px;top:1460.70px;font-size:9.8px;line-height:9.8px;font-weight:400;color:#333;letter-spacing:1.153px;white-space:nowrap;transform:scaleX(0.8);transform-origin:0 0;">Sheet:</div>
<div style="position:absolute;left:1858.60px;top:1322.20px;font-size:15px;line-height:15px;font-weight:400;color:#1a1a1a;letter-spacing:1.277px;white-space:nowrap;transform:scaleX(0.8);transform-origin:0 0;">Stainless steel Mat.No. 1.4301</div>
<div style="position:absolute;left:2110.20px;top:1322.20px;font-size:15px;line-height:15px;font-weight:400;color:#1a1a1a;letter-spacing:1.288px;white-space:nowrap;transform:scaleX(0.8);transform-origin:0 0;">ISO 2768-m</div>
<div style="position:absolute;left:2248.40px;top:1322.20px;font-size:15px;line-height:15px;font-weight:400;color:#1a1a1a;letter-spacing:1.538px;white-space:nowrap;transform:scaleX(0.8);transform-origin:0 0;">1 : 1</div>
<div style="position:absolute;left:1858.60px;top:1359.80px;font-size:15px;line-height:15px;font-weight:400;color:#1a1a1a;letter-spacing:1.134px;white-space:nowrap;transform:scaleX(0.8);transform-origin:0 0;">Box</div>
<div style="position:absolute;left:1858.60px;top:1378.60px;font-size:15px;line-height:15px;font-weight:400;color:#1a1a1a;letter-spacing:-0.462px;white-space:nowrap;transform:scaleX(0.8);transform-origin:0 0;">ST1</div>
<div style="position:absolute;left:1858.60px;top:1397.40px;font-size:15px;line-height:15px;font-weight:400;color:#1a1a1a;letter-spacing:0.330px;white-space:nowrap;transform:scaleX(0.8);transform-origin:0 0;">ST2</div>
<div style="position:absolute;left:2110.20px;top:1360.80px;font-size:15px;line-height:15px;font-weight:400;color:#1a1a1a;letter-spacing:1.206px;white-space:nowrap;transform:scaleX(0.8);transform-origin:0 0;">A. Nemesis</div>
<div style="position:absolute;left:2110.20px;top:1398.40px;font-size:15px;line-height:15px;font-weight:400;color:#1a1a1a;letter-spacing:1.209px;white-space:nowrap;transform:scaleX(0.8);transform-origin:0 0;">B. Hecate</div>
<div style="position:absolute;left:1858.40px;top:1436.30px;font-size:15px;line-height:15px;font-weight:400;color:#1a1a1a;letter-spacing:1.368px;white-space:nowrap;transform:scaleX(0.8);transform-origin:0 0;">Component Drawing</div>
<div style="position:absolute;left:2110.20px;top:1436.30px;font-size:15px;line-height:15px;font-weight:400;color:#1a1a1a;letter-spacing:-0.208px;white-space:nowrap;transform:scaleX(0.8);transform-origin:0 0;">DN</div>
<div style="position:absolute;left:2298.40px;top:1436.30px;font-size:15px;line-height:15px;font-weight:400;color:#1a1a1a;letter-spacing:-0.458px;white-space:nowrap;transform:scaleX(0.8);transform-origin:0 0;">RD</div>
<div style="position:absolute;left:1858.40px;top:1474.20px;font-size:15px;line-height:15px;font-weight:400;color:#1a1a1a;letter-spacing:1.763px;white-space:nowrap;transform:scaleX(0.8);transform-origin:0 0;">In preparation</div>
<div style="position:absolute;left:2129.40px;top:1474.20px;font-size:15px;line-height:15px;font-weight:400;color:#1a1a1a;letter-spacing:-0.044px;white-space:nowrap;transform:scaleX(0.8);transform-origin:0 0;">EN</div>
<div style="position:absolute;left:2172.10px;top:1474.20px;font-size:15px;line-height:15px;font-weight:400;color:#1a1a1a;letter-spacing:1.807px;white-space:nowrap;transform:scaleX(0.8);transform-origin:0 0;">24 Aug 2025</div>
<div style="position:absolute;left:2312.00px;top:1474.20px;font-size:15px;line-height:15px;font-weight:400;color:#1a1a1a;letter-spacing:1.411px;white-space:nowrap;transform:scaleX(0.8);transform-origin:0 0;">AAA</div>
<div style="position:absolute;left:2372.10px;top:1474.20px;font-size:15px;line-height:15px;font-weight:400;color:#1a1a1a;letter-spacing:2.313px;white-space:nowrap;transform:scaleX(0.8);transform-origin:0 0;">1 / 1</div>
<svg style="left:0;top:0" width="2560" height="1599" viewBox="0 0 2560 1599"><defs><linearGradient id="gl" x1="0" y1="0" x2="1" y2="0"><stop offset="0" stop-color="#6e7486"/><stop offset="1" stop-color="#7f8598"/></linearGradient><linearGradient id="gr" x1="0" y1="0" x2="1" y2="0.3"><stop offset="0" stop-color="#626676"/><stop offset="1" stop-color="#565a68"/></linearGradient><linearGradient id="gb" x1="0" y1="0" x2="0" y2="1"><stop offset="0" stop-color="#8c92a1"/><stop offset="1" stop-color="#7f8497"/></linearGradient></defs><path d="M1506.3 623.4L1322 784.3L1334.3 1031.2L1550.6 884.7Z" fill="url(#gl)"/><path d="M1506.3 623.4L1703 737.9L1767.6 974.5L1550.6 884.7Z" fill="url(#gr)"/><path d="M1550.6 884.7L1767.6 974.5L1553.4 1088L1334.3 1031.2Z" fill="url(#gb)"/><path d="M1085.5 514V1239.5H1953" fill="none" stroke="#a9ab8c" stroke-width="1" stroke-dasharray="1.3 1.4 1.3 4.2"/><path d="M1157.9 1148.2L1152.2 1116" stroke="#2323a8" stroke-width="1" stroke-dasharray="2 2"/><path d="M1157.9 1148.2L1185.9 1158.8" stroke="#c02525" stroke-width="1.1" stroke-dasharray="2 2"/><path d="M1157.9 1148.2L1131.9 1165.5" stroke="#40c040" stroke-width="1" stroke-dasharray="2 2"/></svg>
<div style="position:absolute;left:1472.60px;top:1250.67px;font-size:20px;line-height:20px;font-weight:400;color:#6aab1c;letter-spacing:1.880px;white-space:nowrap;transform:scaleX(0.8);transform-origin:0 0;">ActiveView</div>
<svg style="left:0;top:0" width="2560" height="1599" viewBox="0 0 2560 1599"><defs><linearGradient id="selg" x1="0" y1="0" x2="0" y2="1"><stop offset="0" stop-color="#cfcfcf"/><stop offset="1" stop-color="#ededed"/></linearGradient><radialGradient id="blueb" cx="0.4" cy="0.35" r="0.7"><stop offset="0" stop-color="#9fd0f5"/><stop offset="0.6" stop-color="#3d8fd6"/><stop offset="1" stop-color="#2a6fb8"/></radialGradient><linearGradient id="playg" x1="0" y1="0" x2="1" y2="1"><stop offset="0" stop-color="#d8d8d8"/><stop offset="1" stop-color="#5a5a5a"/></linearGradient><linearGradient id="cubt" x1="0" y1="0" x2="1" y2="1"><stop offset="0" stop-color="#b9defa"/><stop offset="1" stop-color="#6bb2ec"/></linearGradient><linearGradient id="cubl" x1="0" y1="0" x2="0" y2="1"><stop offset="0" stop-color="#5aa6e6"/><stop offset="1" stop-color="#3a82cc"/></linearGradient><linearGradient id="cubr" x1="0" y1="0" x2="0" y2="1"><stop offset="0" stop-color="#2a6cc0"/><stop offset="1" stop-color="#1b4e9c"/></linearGradient><linearGradient id="grn" x1="0" y1="0" x2="0" y2="1"><stop offset="0" stop-color="#9be84a"/><stop offset="1" stop-color="#3aa812"/></linearGradient></defs><rect x="1118" y="494" width="1023" height="51" fill="#e3e3e3"/><rect x="1132.5" y="494.5" width="65" height="50" rx="3" fill="url(#selg)" stroke="#d2d2d2"/><path d="M1182.6 495V544" stroke="#c4c4c4" stroke-width="1.5"/><rect x="1886.5" y="494.5" width="65" height="50" rx="3" fill="url(#selg)" stroke="#d2d2d2"/><path d="M1937.4 495V544" stroke="#c4c4c4" stroke-width="1.5"/><path d="M1159 503.5L1174 518.6L1159 533.5L1144 518.6Z" fill="url(#blueb)"/><circle cx="1159" cy="518.6" r="11.5" fill="url(#blueb)"/><g stroke="#555" stroke-width="3.6" stroke-linecap="round" fill="none"><path d="M1159 500.5V508M1159 529V537M1140.5 518.6H1148M1170 518.6H1177.5"/></g><g stroke="#eee" stroke-width="1.2" stroke-linecap="round"><path d="M1160 502V506M1160 531V535M1142 517.5H1146M1172 517.5H1176"/></g><g fill="#111"><path d="M1153.5 510H1164.5L1159 515.5Z"/><path d="M1153.5 527.2H1164.5L1159 521.7Z"/><path d="M1150.3 513.1V524.1L1155.8 518.6Z"/><path d="M1167.7 513.1V524.1L1162.2 518.6Z"/></g><path d="M1184.5 517.5H1194.5L1189.5 523.5Z" fill="#7a7a7a"/><path d="M1226.6 511.5V528" stroke="#f7f7f7" stroke-width="1.2"/><path d="M1260 519V530.5H1280V519" fill="#fbe79c" stroke="#b78a2a" stroke-width="1.5"/><path d="M1256.5 520.5L1269.8 507.5L1283 520.5" fill="#fff4c8" stroke="#c4303c" stroke-width="2.4" stroke-linejoin="round"/><path d="M1260.5 520L1269.8 511L1279 520V530H1260.5Z" fill="#fbe79c"/><rect x="1265.8" y="521" width="7.5" height="9.5" fill="#9b6012"/><path d="M1259.5 530.8H1280.5" stroke="#9b6012" stroke-width="1.6"/><rect x="1310.5" y="505.5" width="176" height="30" fill="#fff" stroke="#8a8a8a" stroke-width="1"/><path d="M1467 519L1472.5 524.5L1478 519" fill="none" stroke="#333" stroke-width="1.3"/><g fill="none" stroke="#1b4f9c" stroke-width="1.6"><path d="M1528.5 510.5V532.5H1541M1528.5 518.5H1541"/></g><path d="M1528.5 511V532M1529 518.5H1540M1529 532H1540" stroke="#78b4ec" stroke-width="1"/><rect x="1534" y="502.5" width="22.5" height="5.5" fill="#6fb0ea" stroke="#1b4f9c" stroke-width="1.4"/><rect x="1550" y="516.5" width="6.5" height="4.5" fill="#6fb0ea" stroke="#1b4f9c" stroke-width="1.3"/><rect x="1550" y="530" width="6.5" height="4.5" fill="#6fb0ea" stroke="#1b4f9c" stroke-width="1.3"/><rect x="1524.5" y="500.3" width="10" height="10" fill="#eef2fa" stroke="#1b4f9c" stroke-width="1.4"/><rect x="1540.8" y="513.7" width="10.5" height="10" fill="#eef2fa" stroke="#1b4f9c" stroke-width="1.4"/><rect x="1540.8" y="527.4" width="10.5" height="9.8" fill="#eef2fa" stroke="#1b4f9c" stroke-width="1.4"/><path d="M1594.6 511.5V528" stroke="#f7f7f7" stroke-width="1.2"/><path d="M1636.5 508L1663.5 520L1636.5 531Z" fill="url(#playg)" stroke="#3a3a3a" stroke-width="1.2" stroke-linejoin="round"/><path d="M1674.5 517.5H1685.5L1680 523.5Z" fill="#a8a8a8"/><path d="M1726.5 511L1740 504L1756 510L1742 517Z" fill="url(#cubt)"/><path d="M1726.5 511L1742 517L1742 534L1728 527Z" fill="url(#cubl)"/><path d="M1742 517L1756 510L1755 526L1742 534Z" fill="url(#cubr)"/><path d="M1810 507L1824 500.5L1840.5 506.5L1826 513Z" fill="url(#cubt)"/><path d="M1810 507L1826 513V534L1811 527Z" fill="url(#cubl)"/><path d="M1826 513L1840.5 506.5V527L1826 534Z" fill="url(#cubr)"/><rect x="1801.3" y="519.3" width="17.8" height="17.8" fill="url(#grn)" stroke="#3b3b3b" stroke-width="1.4"/><path d="M1848 517.5H1859L1853.5 523.5Z" fill="#b0b0b0"/><g stroke="#555" stroke-width="2" fill="none" stroke-linecap="round"><path d="M1906 504.5L1900 519L1906 528M1906 504.5L1913 508"/></g><ellipse cx="1909" cy="531.5" rx="9.5" ry="2.8" fill="#707070"/><circle cx="1907" cy="503.5" r="2.6" fill="#fff" stroke="#555" stroke-width="1.3"/><path d="M1913 506L1927 510L1920 524Z" fill="#9a9a9a"/><path d="M1916 514L1927 510.5L1922 523Z" fill="#f2c22a" stroke="#6a5a20" stroke-width="1"/><path d="M1938.5 517.5H1949.5L1944 523.5Z" fill="#6a6a6a"/><rect x="1981" y="500.5" width="25" height="24.5" fill="#fff" stroke="#6a6a6a" stroke-width="2"/><path d="M2023 517.5H2034L2028.5 523.5Z" fill="#b0b0b0"/><path d="M2071 519L2084 501.5L2087 534.5Z" fill="#d43a5e"/><path d="M2084 501.5L2092 501.5L2103 531L2095 535L2087 534.5Z" fill="#cf3358"/><path d="M2092 501.5L2103.5 530" stroke="#5aa8e8" stroke-width="2.2"/><path d="M2083.5 502V533" stroke="#333" stroke-width="2.4"/><path d="M2086 502V533" stroke="#aaa" stroke-width="1"/><path d="M2113.5 517.5H2124.5L2119 523.5Z" fill="#6a6a6a"/></svg>
<div style="position:absolute;left:1313.50px;top:513.81px;font-size:17px;line-height:17px;font-weight:400;color:#111;letter-spacing:0.292px;white-space:nowrap;">Views</div>
<div style="position:absolute;left:2365.5px;top:501px;width:65px;height:485px;background:#2c2c2c;border:1.5px solid #4d4d4d;border-radius:7px"></div>
<div style="position:absolute;left:2371px;top:507px;width:54px;height:7px;background:#6a6a6a;border-radius:4px"></div>
<div style="position:absolute;left:2371px;top:527px;width:54px;height:54px;background:#1473e6;border-radius:7px"></div>
<svg style="left:0;top:0" width="2560" height="1599" viewBox="0 0 2560 1599"><path d="M2389.5 553.5V544.2a2 2 0 0 1 4 0V552M2393.5 552V541.5a2 2 0 0 1 4 0V551.5M2397.5 551.5V542.3a2 2 0 0 1 4 0V552M2401.5 552V545.2a2 2 0 0 1 4 0V556.5c0 6.5-4.5 11-10.5 11s-8.8-3.2-11-7.2l-3.5-5.8a2.1 2.1 0 0 1 3.2-2.6l3.8 3.6" fill="none" stroke="#fff" stroke-width="2.3" stroke-linejoin="round" stroke-linecap="round"/><path d="M2418.0 565.0V574.0H2409.0Z" fill="#fff"/><path d="M2397.4 632.3H2409.8V620c0-7-5.5-12.3-12.4-12.3s-12.4 5.5-12.4 12.3 5.5 12.3 12.4 12.3z" fill="none" stroke="#d6d6d6" stroke-width="2.2" stroke-linejoin="round"/><path d="M2391.5 617H2404M2391.5 621.8H2401" stroke="#d6d6d6" stroke-width="2.2"/><path d="M2418.0 631.8V640.8H2409.0Z" fill="#c4c4c4"/><path d="M2390.5 690.5L2407 674a2.4 2.4 0 0 1 3.4 0l.6.6a2.4 2.4 0 0 1 0 3.4L2394.5 694.5Z" fill="none" stroke="#d6d6d6" stroke-width="2.2" stroke-linejoin="round"/><path d="M2383.5 697.5c.3-3 2.5-5 5-5s4 1.5 4 5z" fill="#d6d6d6"/><path d="M2395 693.5H2411L2408.5 698H2392.5Z" fill="#7a7a7a"/><path d="M2418.0 698.3V707.3H2409.0Z" fill="#c4c4c4"/><path d="M2399 756c4.5 0 11-2 11-6.5s-4.5-5.5-10-5.5c-8 0-15.8 4-15.8 9s4.5 9.8 11 9.8c2.8 0 5-.3 6-1" fill="none" stroke="#d6d6d6" stroke-width="2.1" stroke-linecap="round"/><path d="M2418.0 764.8V773.8H2409.0Z" fill="#c4c4c4"/><rect x="2384" y="805.3" width="28.2" height="27.6" fill="none" stroke="#d6d6d6" stroke-width="2.2" stroke-dasharray="2.6 2"/><path d="M2391.5 826.5L2398 811L2404.5 826.5M2393.6 821.5H2402.4" fill="none" stroke="#d6d6d6" stroke-width="2.2"/><path d="M2418.0 831.3V840.3H2409.0Z" fill="#c4c4c4"/><path d="M2384.5 898l3.5-11.5 9.5-7.5 7 7-7.5 9.5z" fill="none" stroke="#d6d6d6" stroke-width="2.2" stroke-linejoin="round"/><path d="M2397.5 879l3-3.5 6.5 6.5-3.5 3" fill="none" stroke="#d6d6d6" stroke-width="2.2" stroke-linejoin="round"/><circle cx="2393.5" cy="889.5" r="1.8" fill="#d6d6d6"/><path d="M2385 897.5L2392.5 890.5" stroke="#d6d6d6" stroke-width="1.5"/><path d="M2398 896.5c2.5-1 4-3.5 5.5-5.5c.5 2 .5 4-.5 5.5c2 0 3.5-.5 5-1.5" fill="none" stroke="#d6d6d6" stroke-width="1.8"/><path d="M2418.0 897.8V906.8H2409.0Z" fill="#c4c4c4"/><circle cx="2386.5" cy="952.7" r="2.2" fill="#d0d0d0"/><circle cx="2396.8" cy="952.7" r="2.2" fill="#d0d0d0"/><circle cx="2407.1" cy="952.7" r="2.2" fill="#d0d0d0"/></svg>
<div style="position:absolute;left:2510px;top:210px;width:22px;height:2px;background:#4a4a4a"></div>
<svg style="left:0;top:0" width="2560" height="1599" viewBox="0 0 2560 1599"><path d="M2461 152.8L2467 144.2L2473 152.8Z" fill="#5a5a5a"/><path d="M2460.5 1579L2466.5 1587.5L2472.5 1579Z" fill="#5a5a5a"/><path d="M2521 166H2508.5a2 2 0 0 0-2 2V187a2 2 0 0 0 2 2H2531.5a2 2 0 0 0 2-2V176" fill="none" stroke="#c8c4f6" stroke-width="2.6" stroke-linejoin="round"/><path d="M2530 161l1.8 4.2 4.2 1.8-4.2 1.8-1.8 4.2-1.8-4.2-4.2-1.8 4.2-1.8z" fill="#c8c4f6" stroke="#c8c4f6" stroke-width="1.5" stroke-linejoin="round"/><path d="M2511.5 171.5H2518M2511.5 177H2515.5M2511.5 182.5H2518" stroke="#c8c4f6" stroke-width="2.4"/><path d="M2520 175l.9 2.2 2.2.9-2.2.9-.9 2.2-.9-2.2-2.2-.9 2.2-.9z" fill="#c8c4f6"/><path d="M2534 250V242.5c0-6.3-5.1-11.4-11.4-11.4s-11.4 5.1-11.4 11.4 5.1 11.4 11.4 11.4h11.4z" fill="none" stroke="#c9c9c9" stroke-width="2.4" stroke-linejoin="round"/><path d="M2518.5 240.2H2527.3M2518.5 245.6H2524.5" stroke="#c9c9c9" stroke-width="2.3"/><path d="M2508.5 239.5c-1.5 1.8-2.2 3.8-2.2 6.2 0 6.8 5.5 12.5 12.5 12.5h9.5" fill="none" stroke="#c9c9c9" stroke-width="2.4" stroke-linecap="round"/><path d="M2506.3 294.8H2523.5V322L2514.9 315.5L2506.3 322Z" fill="none" stroke="#c9c9c9" stroke-width="2.5" stroke-linejoin="round"/><path d="M2527.5 299H2535M2527.5 304.5H2535M2527.5 310H2535" stroke="#c9c9c9" stroke-width="2.4"/><path d="M2508 382V361.5a2 2 0 0 1 2-2H2520" fill="none" stroke="#c9c9c9" stroke-width="2.4" stroke-linecap="round"/><path d="M2513.5 364.5H2526L2532.5 371V385a2 2 0 0 1-2 2H2515.5a2 2 0 0 1-2-2Z" fill="none" stroke="#c9c9c9" stroke-width="2.4" stroke-linejoin="round"/><path d="M2525.5 364.5V371.5H2532.5" fill="none" stroke="#c9c9c9" stroke-width="2.2"/><rect x="2507.5" y="421.5" width="6.5" height="6.5" fill="none" stroke="#c9c9c9" stroke-width="2.2"/><path d="M2514 424.8H2533M2510.8 428V445H2528M2510.8 435H2528" fill="none" stroke="#c9c9c9" stroke-width="2.2"/><rect x="2527" y="431.5" width="6.5" height="6.5" fill="#323232" stroke="#c9c9c9" stroke-width="2.2"/><rect x="2527" y="441.5" width="6.5" height="6.5" fill="#323232" stroke="#c9c9c9" stroke-width="2.2"/><path d="M2514.5 1278.5L2520.8 1272.2L2527.1 1278.5" fill="none" stroke="#7a7a7a" stroke-width="2.8"/><path d="M2514.5 1327.5L2520.8 1333.8L2527.1 1327.5" fill="none" stroke="#7a7a7a" stroke-width="2.8"/><path d="M2534.3 1392.5a12 12 0 1 1-3.5-8.5" fill="none" stroke="#c9c9c9" stroke-width="2.4" stroke-linecap="round"/><path d="M2532 1376V1384.5H2523.5" fill="none" stroke="#c9c9c9" stroke-width="2.4" stroke-linecap="round" stroke-linejoin="round"/><path d="M2510 1437.5H2522L2528 1443.5V1461a1.5 1.5 0 0 1-1.5 1.5H2510a1.5 1.5 0 0 1-1.5-1.5V1439a1.5 1.5 0 0 1 1.5-1.5Z" fill="none" stroke="#c9c9c9" stroke-width="2.3" stroke-linejoin="round"/><path d="M2514 1455.5L2523 1447M2514 1451V1455.5H2518.5M2523 1451.5V1447H2518.5" fill="none" stroke="#c9c9c9" stroke-width="1.8"/><path d="M2542 1462V1471H2533Z" fill="#bdbdbd"/><circle cx="2519.5" cy="1509" r="9.3" fill="none" stroke="#c9c9c9" stroke-width="2.4"/><path d="M2526.2 1515.7L2533.5 1523M2515 1509H2524M2519.5 1504.5V1513.5" stroke="#c9c9c9" stroke-width="2.4" stroke-linecap="round"/><circle cx="2519.5" cy="1568" r="9.3" fill="none" stroke="#c9c9c9" stroke-width="2.4"/><path d="M2526.2 1574.7L2533.5 1582M2515 1568H2524" stroke="#c9c9c9" stroke-width="2.4" stroke-linecap="round"/></svg>
<div style="position:absolute;left:2494px;top:1132px;width:53px;height:54px;background:#1d1d1d;border:2px solid #6b6b6b;border-radius:7px"></div>
<div style="position:absolute;left:2515.42px;top:1150.42px;font-size:19px;line-height:19px;font-weight:400;color:#f2f2f2;letter-spacing:0.000px;white-space:nowrap;">1</div>
<div style="position:absolute;left:2515.42px;top:1206.92px;font-size:19px;line-height:19px;font-weight:400;color:#f2f2f2;letter-spacing:0.000px;white-space:nowrap;">1</div>
<div style="position:absolute;left:2494px;top:1360px;width:53px;height:1.5px;background:#4a4a4a"></div>
</body></html>
